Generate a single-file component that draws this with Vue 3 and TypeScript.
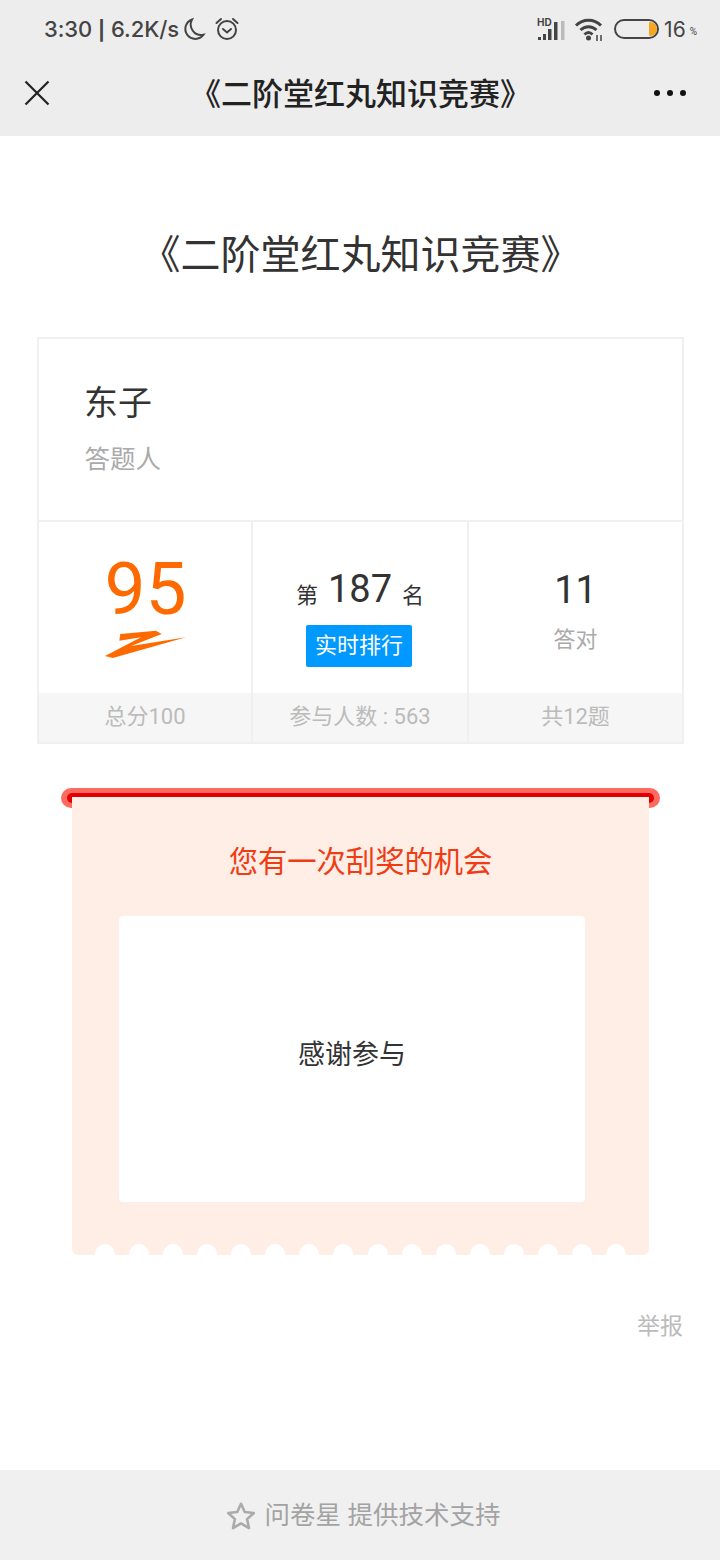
<script setup lang="ts">
const scallops = Array.from({ length: 16 }, (_, i) => i);
</script>

<template>
  <div class="page">
    <header class="top">
      <div class="status">
        <div class="status-left">
          <span class="clock">3:30 <em class="sep">|</em> 6.2K/s</span>
          <svg class="moon" width="24" height="26" viewBox="0 0 24 26">
            <path d="M10 3.500a10 10 0 1 0 11.500 15.200A10.500 10.500 0 0 1 10 3.500Z" fill="none" stroke="#444" stroke-width="2" />
          </svg>
          <svg class="alarm" width="24" height="26" viewBox="0 0 24 26">
            <circle cx="12" cy="14" r="9" fill="none" stroke="#444" stroke-width="2" />
            <path d="M8 13l4 3.500 4-3.500M1.500 7L6 3M22.500 7L18 3" fill="none" stroke="#444" stroke-width="2" stroke-linecap="round" />
          </svg>
        </div>
        <div class="status-right">
          <svg width="29" height="24" viewBox="0 0 29 24">
            <text x="0" y="9" class="hd">HD</text>
            <rect x="1" y="20" width="3" height="3" fill="#444" />
            <rect x="6" y="17" width="3" height="6" fill="#444" />
            <rect x="11" y="12" width="3.500" height="11" fill="#444" />
            <rect x="17" y="5" width="3.500" height="18" fill="#444" />
            <rect x="24" y="4" width="3.500" height="19" fill="#bbb" />
          </svg>
          <svg class="wifi" width="30" height="24" viewBox="0 0 30 24">
            <path d="M2 8.500C9 1.500 20 1.500 27 8.500M6.500 13C11 8.500 18 8.500 22.500 13M10.500 17.500C13 15 16 15 18.500 17.500" fill="none" stroke="#444" stroke-width="3" />
            <circle cx="14.500" cy="21" r="2.500" fill="#444" />
            <path d="M23 18v6M27 18v6" stroke="#444" stroke-width="1.500" />
          </svg>
          <div class="battery"><span class="battery-fill"></span></div>
          <span class="pct">16</span>
          <span class="pct-sign">%</span>
        </div>
      </div>
      <nav class="nav">
        <svg class="close" width="26" height="26" viewBox="0 0 26 26">
          <path d="M1.500 1.500L24.500 24.500M24.500 1.500L1.500 24.500" stroke="#222" stroke-width="2.200" fill="none" />
        </svg>
        <span class="nav-title">《二阶堂红丸知识竞赛》</span>
        <div class="dots"><i></i><i></i><i></i></div>
      </nav>
    </header>

    <main class="content">
      <h1 class="title">《二阶堂红丸知识竞赛》</h1>

      <section class="card">
        <div class="person">
          <div class="person-name">东子</div>
          <div class="person-label">答题人</div>
        </div>
        <div class="stats">
          <div class="stat">
            <div class="stat-body">
              <div class="score">95</div>
              <svg class="scribble" width="82" height="30" viewBox="0 0 82 30">
                <path d="M15.300 4L51 .7 56.700 4 26 16 81 7.300 7.700 28 0 26 36 7.300 14.300 10.700Z" fill="#ff6a00" />
              </svg>
            </div>
            <div class="stat-foot">总分100</div>
          </div>
          <div class="stat">
            <div class="stat-body">
              <div class="rank"><span>第</span><b>187</b><span>名</span></div>
              <div class="rank-btn">实时排行</div>
            </div>
            <div class="stat-foot">参与人数 : 563</div>
          </div>
          <div class="stat">
            <div class="stat-body">
              <div class="correct">11</div>
              <div class="correct-label">答对</div>
            </div>
            <div class="stat-foot">共12题</div>
          </div>
        </div>
      </section>

      <section class="ticket-wrap">
        <div class="slot"><span class="slot-line"></span></div>
        <div class="ticket">
          <div class="ticket-title">您有一次刮奖的机会</div>
          <div class="ticket-area">感谢参与</div>
          <div class="scallops">
            <i v-for="n in scallops" :key="n"></i>
          </div>
        </div>
      </section>

      <div class="report">举报</div>
    </main>

    <footer class="foot">
      <svg class="foot-star" width="32" height="32" viewBox="0 0 30 30">
        <path d="M15 3.500l3.500 7.800 8.500.9-6.300 5.700 1.800 8.400L15 22l-7.500 4.300 1.800-8.400L3 12.200l8.500-.9Z" fill="none" stroke="#aaa" stroke-width="2.400" stroke-linejoin="round" />
      </svg>
      <span>问卷星 提供技术支持</span>
    </footer>
  </div>
</template>

<style>
html, body { margin: 0; padding: 0; background: #fff; }
</style>

<style scoped>
.page {
  width: 720px;
  height: 1560px;
  display: flex;
  flex-direction: column;
  font-family: "Roboto", "Noto Sans CJK SC", sans-serif;
  overflow: hidden;
}
.top { background: #ededed; height: 136px; flex: none; }
.status {
  height: 56px;
  box-sizing: border-box;
  padding: 2px 23px 0 44px;
  display: flex;
  justify-content: space-between;
  align-items: center;
  color: #444;
}
.status-left, .status-right { display: flex; align-items: center; }
.clock {
  font-family: "Inter", sans-serif;
  font-size: 22px;
  font-weight: 500;
  letter-spacing: -.05px;
}
.sep { font-style: normal; font-size: 19px; font-weight: 700; }
.moon { margin-left: 3px; }
.alarm { margin-left: 9px; }
.hd { font: 700 10px "Inter", sans-serif; fill: #444; }
.wifi { margin-left: 8px; }
.battery {
  width: 45px;
  height: 20px;
  margin-left: 10px;
  box-sizing: border-box;
  border: 2px solid #444;
  border-radius: 10px;
  display: flex;
  justify-content: flex-end;
  align-items: center;
}
.battery-fill {
  width: 8px;
  height: 14px;
  background: #f5a623;
  border-radius: 1px 7px 7px 1px;
}
.pct {
  font-family: "Inter", sans-serif;
  font-size: 21px;
  font-weight: 400;
  margin-left: 5px;
}
.pct-sign { font-size: 10px; margin-left: 4px; margin-top: 5px; }
.nav {
  height: 74px;
  padding: 0 34px 0 24px;
  display: flex;
  align-items: center;
  justify-content: space-between;
}
.nav-title {
  font-size: 31px;
  font-weight: 500;
  color: #222;
  margin: 0 0 4px 17px;
}
.dots { display: flex; gap: 7px; margin-bottom: 1px; }
.dots i { width: 6px; height: 6px; border-radius: 50%; background: #111; }

.content { flex: 1; padding: 0 36px 0 37px; }
.title {
  margin: 92px 0 0;
  height: 56px;
  line-height: 56px;
  font-size: 40px;
  font-weight: 400;
  color: #333;
  text-align: center;
}
.card {
  margin-top: 53px;
  height: 407px;
  box-sizing: border-box;
  border: 2px solid #f0f0f0;
  display: flex;
  flex-direction: column;
}
.person {
  height: 183px;
  box-sizing: border-box;
  padding: 40px 0 0 45px;
  border-bottom: 2px solid #f0f0f0;
}
.person-name { font-size: 34px; line-height: 48px; color: #333; }
.person-label { font-size: 25.500px; line-height: 36px; margin: 14px 0 0 .5px; color: #aaa; }
.stats { flex: 1; display: flex; }
.stat {
  display: flex;
  flex-direction: column;
  text-align: center;
  box-sizing: border-box;
  flex: none;
  width: 215px;
}
.stat:nth-child(1) { width: 212px; }
.stat:nth-child(2) { width: 216px; }
.stat + .stat { border-left: 2px solid #f0f0f0; }
.stat-body {
  flex: 1;
  display: flex;
  flex-direction: column;
  align-items: center;
}
.stat:nth-child(1) .stat-body { padding-left: 1px; }
.stat-foot {
  height: 49px;
  line-height: 48px;
  background: #f6f6f6;
  font-size: 22px;
  color: #bbb;
}
.score {
  margin-top: 28px;
  height: 78px;
  line-height: 78px;
  font-size: 73px;
  color: #ff6a00;
}
.scribble { margin-top: 2px; }
.rank {
  margin-top: 42px;
  height: 50px;
  display: flex;
  align-items: center;
  gap: 10px;
  color: #333;
}
.rank span { font-size: 22px; margin-top: 7px; }
.rank b { font-size: 38px; font-weight: 400; }
.rank-btn {
  margin: 11px 2px 0 0;
  width: 106px;
  height: 42px;
  line-height: 42px;
  background: #0099ff;
  border-radius: 2px;
  color: #fff;
  font-size: 22px;
}
.correct {
  margin-top: 43px;
  height: 50px;
  line-height: 50px;
  font-size: 38px;
  color: #333;
}
.correct-label { margin-top: 4px; line-height: 42px; font-size: 22px; color: #aaa; }

.ticket-wrap { margin: 44px 24px 0; }
.slot {
  height: 20px;
  background: #ff6a60;
  border-radius: 10px;
  padding: 5px 6px 0;
  box-sizing: border-box;
}
.slot-line {
  display: block;
  height: 10px;
  background: #e00000;
  border-radius: 5px;
}
.ticket {
  position: relative;
  margin: -11px 11px 0;
  height: 458px;
  background: #ffeee6;
  border-radius: 0 0 6px 6px;
  overflow: hidden;
  display: flex;
  flex-direction: column;
  align-items: center;
}
.ticket-title {
  margin-top: 44px;
  line-height: 42px;
  font-size: 29.300px;
  color: #f03c14;
}
.ticket-area {
  margin-top: 33px;
  align-self: flex-start;
  margin-left: 47px;
  width: 466px;
  height: 286px;
  box-sizing: border-box;
  padding-bottom: 14px;
  background: #fff;
  border-radius: 4px;
  display: flex;
  align-items: center;
  justify-content: center;
  font-size: 27px;
  color: #333;
}
.scallops {
  margin-top: auto;
  height: 11px;
  display: flex;
  gap: 14.100px;
}
.scallops i {
  width: 20px;
  height: 20px;
  border-radius: 50%;
  background: #fff;
}
.report {
  margin-top: 55px;
  padding-right: 1px;
  line-height: 34px;
  text-align: right;
  font-size: 23px;
  color: #bbb;
}
.foot {
  height: 90px;
  box-sizing: border-box;
  padding: 0 0 6px 5px;
  flex: none;
  background: #f0f0f0;
  display: flex;
  align-items: center;
  justify-content: center;
  gap: 8px;
  font-size: 25.500px;
  color: #a3a3a3;
}
.foot-star { margin-top: 8px; }
</style>
